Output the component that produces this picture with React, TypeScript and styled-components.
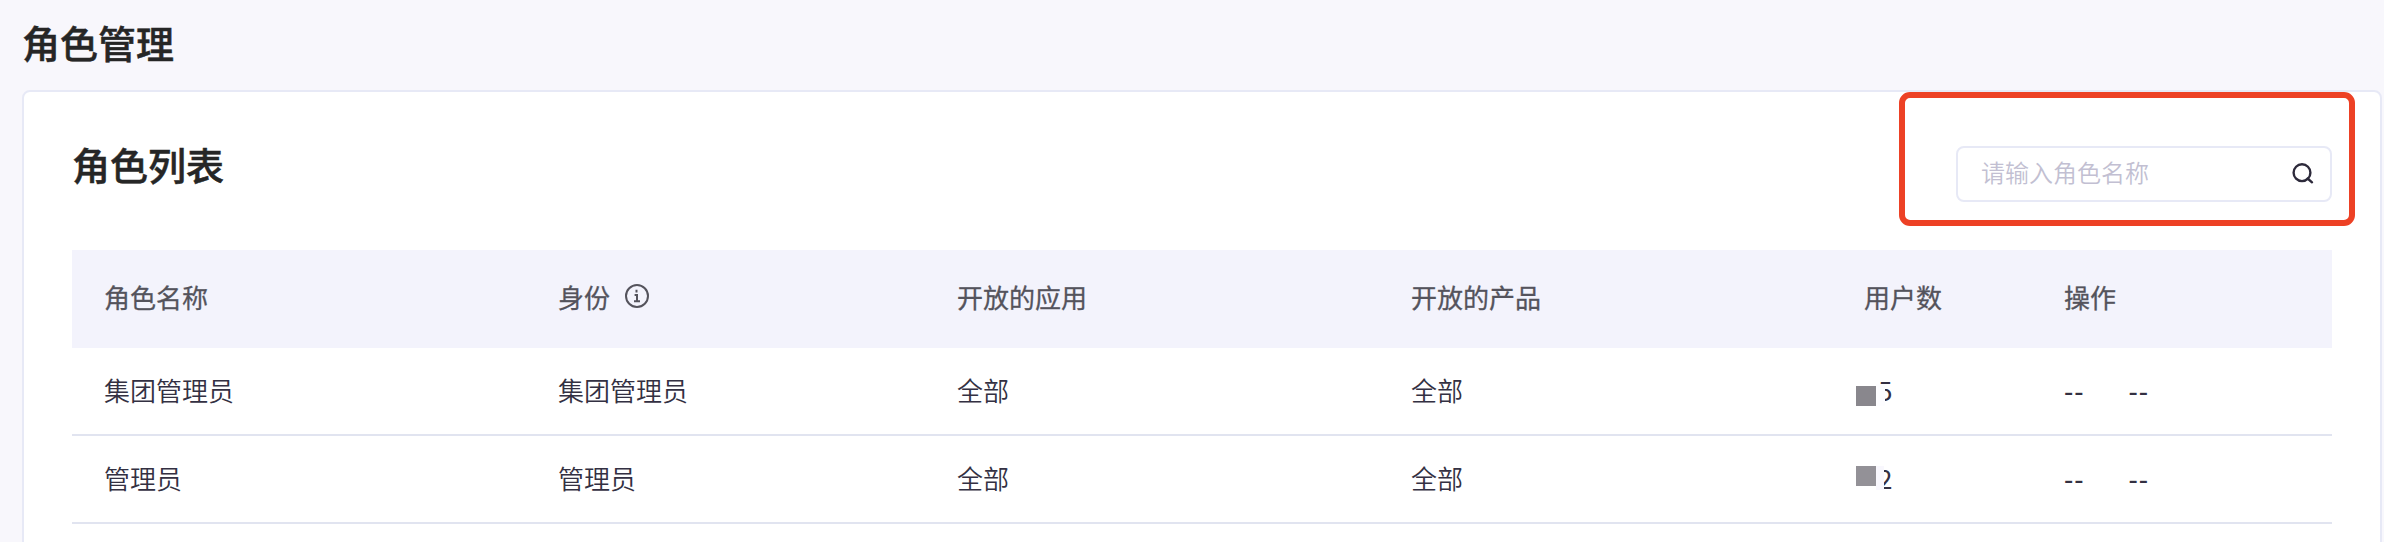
import React from "react";
import styled, { createGlobalStyle } from "styled-components";

const Global = createGlobalStyle`
  * { box-sizing: border-box; }
  body { margin: 0; background: #f8f7fc; overflow: hidden; font-family: "Noto Sans CJK SC", sans-serif; color: #333042; }
  h1, h2 { margin: 0; color: #262626; font-size: 38px; line-height: 50px; font-weight: 500; -webkit-text-stroke: 0.5px #262626; }
`;
const Page = styled.main`
  height: 542px;
  padding: 17px 2px 0 22px;
  overflow: hidden;
`;
const PageTitle = styled.h1`
  height: 73px;
`;
const Card = styled.section`
  height: 480px;
  background: #fff;
  border: 2px solid #e7e9f6;
  border-radius: 8px;
  padding: 0 48px;
`;
const CardHead = styled.header`
  display: flex;
  justify-content: space-between;
  height: 158px;
`;
const CardTitle = styled.h2`
  padding-top: 47px;
`;
const Highlight = styled.div`
  width: 456px;
  height: 134px;
  margin-right: -23px;
  border: 6px solid #ed4125;
  border-radius: 11px;
  padding: 48px 17px 0 51px;
`;
const Search = styled.label`
  display: flex;
  align-items: center;
  justify-content: space-between;
  height: 56px;
  border: 2px solid #e7e9f6;
  border-radius: 8px;
  padding: 0 16px 0 23px;
`;
const Placeholder = styled.span`
  color: #c2bfd2;
  font-size: 24px;
  line-height: 36px;
  font-weight: 350;
  padding-bottom: 4px;
`;
const Row = styled.div<{ $head?: boolean }>`
  display: grid;
  grid-template-columns: 454px 399px 454px 453px 200px 1fr;
  align-items: center;
  height: ${(p) => (p.$head ? 98 : 88)}px;
  padding: 0 0 ${(p) => (p.$head ? 4 : 3)}px 32px;
  font-size: 26px;
  line-height: 38px;
  font-weight: ${(p) => (p.$head ? 400 : 350)};
  color: ${(p) => (p.$head ? "#54535c" : "#333042")};
  -webkit-text-stroke: ${(p) => (p.$head ? "0.3px" : "0")};
  background: ${(p) => (p.$head ? "#f3f3fc" : "#fff")};
  border-bottom: ${(p) => (p.$head ? "0" : "2px solid #e1e4f0")};
`;
const Cell = styled.div`
  display: flex;
  align-items: center;
`;
const InfoIcon = styled.svg`
  margin: 0 0 2px 14px;
`;
const Actions = styled(Cell)`
  gap: 44px;
  letter-spacing: 1px;
  font-weight: 500;
`;
const Count = styled.div`
  position: relative;
  padding-left: 14px;
  font-weight: 400;
`;
const Mosaic = styled.i<{ $top: number; $tone: string }>`
  position: absolute;
  left: -8px;
  top: ${(p) => p.$top}px;
  width: 20px;
  height: 20px;
  background: ${(p) => p.$tone};
`;
const Fade = styled.i<{ $top: number; $width: number; $height: number; $tone: string }>`
  position: absolute;
  left: 12px;
  top: ${(p) => p.$top}px;
  width: ${(p) => p.$width}px;
  height: ${(p) => p.$height}px;
  background: ${(p) => p.$tone};
`;

const roles = [
  { name: "集团管理员", count: 5, top: 15.5, fade: 13.5, width: 9, height: 22, tone: "#89878d", soft: "#fdfdff" },
  { name: "管理员", count: 2, top: 7.5, fade: 7.5, width: 8, height: 24, tone: "#939197", soft: "#f8f7fd" },
];

export default function App() {
  return (
    <Page>
      <Global />
      <PageTitle>角色管理</PageTitle>
      <Card>
        <CardHead>
          <CardTitle>角色列表</CardTitle>
          <Highlight>
            <Search>
              <Placeholder>请输入角色名称</Placeholder>
              <svg width="24" height="24" viewBox="0 0 24 24" fill="none" stroke="#2d2a3b" strokeWidth="2.4" strokeLinecap="round">
                <circle cx="12" cy="10.7" r="8.4" />
                <path d="M17.6 16.5L22 20.3" />
              </svg>
            </Search>
          </Highlight>
        </CardHead>
        <Row $head>
          <Cell>角色名称</Cell>
          <Cell>
            身份
            <InfoIcon width="26" height="26" viewBox="0 0 26 26" fill="none" stroke="#54535c" strokeWidth="2">
              <circle cx="13" cy="13" r="11" />
              <path d="M12.5 6.8v2.6M10.6 12H13v6M10 18.2h6" />
            </InfoIcon>
          </Cell>
          <Cell>开放的应用</Cell>
          <Cell>开放的产品</Cell>
          <Cell>用户数</Cell>
          <Cell>操作</Cell>
        </Row>
        {roles.map((r) => (
          <Row key={r.name}>
            <Cell>{r.name}</Cell>
            <Cell>{r.name}</Cell>
            <Cell>全部</Cell>
            <Cell>全部</Cell>
            <Count>
              {r.count}
              <Mosaic $top={r.top} $tone={r.tone} />
              <Fade $top={r.fade} $width={r.width} $height={r.height} $tone={r.soft} />
            </Count>
            <Actions><span>--</span><span>--</span></Actions>
          </Row>
        ))}
      </Card>
    </Page>
  );
}
